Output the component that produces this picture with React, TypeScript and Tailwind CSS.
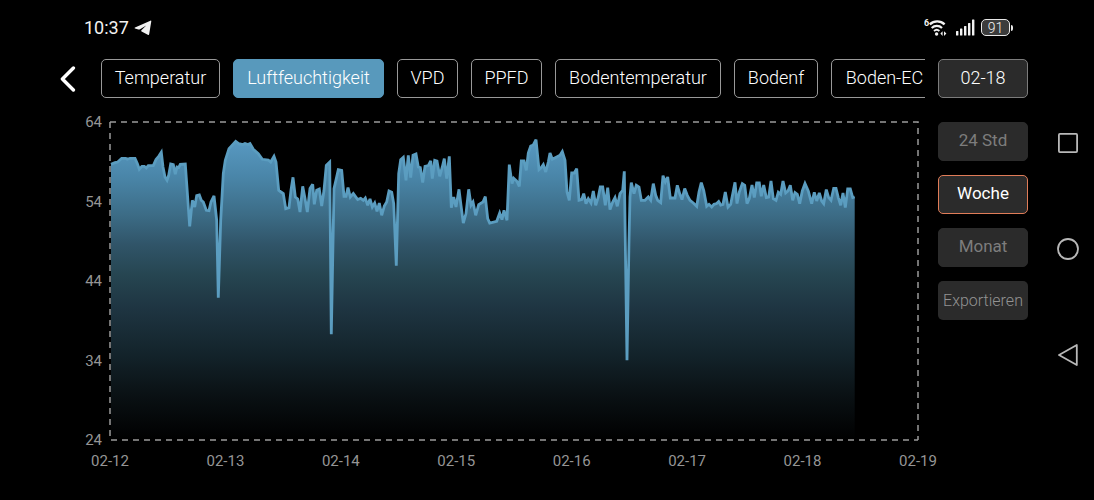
import { useState } from "react";

type Segment = { x: number; y: number; points: [number, number][] };

// Humidity curve, split into segments. Each point is stored in thirds of a plot unit,
// relative to the origin of its segment.
const segments: Segment[] = [
  {
    x: -30,
    y: -12,
    points: [
      [93, 162], [105, 157], [113, 155], [125, 144], [137, 144], [142, 147], [150, 144], [165, 144], [172, 160],
      [178, 177], [186, 168], [193, 168], [199, 173], [205, 166], [220, 166], [228, 148], [236, 138], [244, 126],
      [249, 170], [255, 200], [261, 210], [266, 195], [272, 161], [280, 163], [286, 192], [291, 170], [296, 172],
      [301, 162], [316, 161], [329, 348], [337, 270], [344, 290], [350, 256], [358, 254], [364, 270], [370, 275],
      [379, 300], [387, 301], [393, 275], [402, 257], [410, 330], [415, 562], [422, 330], [430, 190], [436, 150],
      [447, 115], [458, 103], [467, 93], [478, 101],
    ],
  },
  {
    x: 130,
    y: -12,
    points: [
      [0, 101], [8, 103], [15, 100], [24, 103], [30, 100], [40, 117], [55, 130], [67, 147], [85, 149], [92, 155],
      [102, 138], [108, 155], [116, 240], [123, 245], [130, 250], [137, 295], [147, 292], [153, 240], [159, 201],
      [166, 260], [173, 266], [180, 305], [188, 228], [195, 265], [202, 305], [210, 235], [218, 222], [223, 282],
      [230, 240], [238, 236], [245, 287], [252, 240], [259, 165], [269, 155], [274, 672], [282, 235], [289, 205],
      [295, 178], [305, 180], [312, 258], [318, 258], [324, 232], [331, 260], [340, 250], [353, 268], [362, 264],
      [370, 270], [376, 263], [383, 285], [390, 266], [397, 290], [404, 278], [411, 303], [418, 278], [425, 315],
      [433, 287], [440, 275], [447, 242], [455, 246], [461, 280], [469, 466], [476, 190], [482, 148], [490, 141],
      [498, 210], [505, 135], [512, 202], [519, 135],
    ],
  },
  {
    x: 290,
    y: -12,
    points: [
      [48, 131], [55, 170], [61, 172], [68, 217], [75, 168], [85, 166], [92, 152], [97, 205], [104, 150], [111, 152],
      [119, 198], [127, 170], [133, 145], [140, 205], [148, 138], [154, 292], [161, 260], [168, 290], [177, 237],
      [183, 285], [190, 338], [198, 310], [206, 237], [213, 285], [219, 275], [227, 315], [236, 283], [249, 275],
      [256, 259], [263, 325], [269, 338], [290, 333], [299, 308], [306, 328], [312, 300], [321, 330], [328, 163],
      [336, 220], [341, 204], [350, 212], [358, 228], [364, 152], [372, 152], [379, 180], [385, 128], [392, 107],
      [400, 104], [408, 88], [417, 178], [424, 172], [430, 163], [437, 185], [445, 155], [450, 128], [457, 147],
      [470, 140], [480, 135], [487, 124], [495, 150], [501, 245], [508, 270], [515, 188], [523, 188],
    ],
  },
  {
    x: 450,
    y: 8,
    points: [
      [50, 115], [57, 210], [65, 208], [71, 190], [78, 220], [85, 205], [93, 218], [100, 182], [107, 225], [115, 200],
      [121, 170], [128, 170], [136, 225], [143, 172], [150, 238], [158, 215], [165, 202], [172, 228], [180, 190],
      [188, 180], [193, 123], [201, 690], [207, 330], [210, 200], [214, 157], [222, 190], [229, 165], [237, 170],
      [244, 210], [255, 210], [265, 200], [272, 210], [280, 160], [287, 195], [293, 210], [302, 217], [309, 136],
      [316, 155], [323, 140], [331, 203], [345, 203], [352, 165], [359, 190], [366, 208], [374, 175], [382, 195],
      [390, 210], [400, 218], [410, 228], [417, 185], [424, 157], [431, 180],
    ],
  },
  {
    x: 590,
    y: 38,
    points: [
      [20, 138], [27, 132], [35, 140], [42, 132], [50, 130], [56, 124], [62, 134], [69, 132], [76, 95], [84, 140],
      [92, 132], [105, 66], [111, 130], [118, 95], [127, 70], [134, 75], [141, 130], [148, 115], [156, 74],
      [163, 112], [170, 68], [178, 68], [184, 108], [191, 74], [199, 112], [206, 110], [213, 62], [220, 115],
      [228, 120], [235, 96], [242, 102], [249, 62], [257, 98], [264, 92], [271, 75], [278, 120], [285, 97],
      [292, 102], [299, 130], [307, 92], [315, 70], [325, 92], [335, 130], [343, 96], [350, 122], [358, 98],
      [365, 122], [371, 130], [379, 88], [386, 112], [393, 120], [401, 84], [408, 84], [415, 112], [422, 135],
      [429, 98], [436, 142], [443, 86], [451, 86], [458, 112], [464, 110],
    ],
  },
];

const line = segments
  .flatMap((s) => s.points.map(([px, py]) => `${(s.x + px / 3).toFixed(1)},${(s.y + py / 3 + 0.3).toFixed(1)}`))
  .join(" L");

const metrics = [
  { name: "Temperatur", width: "w-[119px]" },
  { name: "Luftfeuchtigkeit", width: "w-[151px]" },
  { name: "VPD", width: "w-[61px]" },
  { name: "PPFD", width: "w-[71px]" },
  { name: "Bodentemperatur", width: "w-[166px]" },
  { name: "Bodenf", width: "w-[84px]" },
  { name: "Boden-EC", width: "w-[107px]" },
];

const ranges = ["24 Std", "Woche", "Monat"];
const yTicks = ["64", "54", "44", "34", "24"];
const xTicks = ["02-12", "02-13", "02-14", "02-15", "02-16", "02-17", "02-18", "02-19"];

function StatusBar() {
  return (
    <header className="flex h-[59px] items-center justify-between pb-1 pl-[84px] pr-[81px] text-[#f2f2f2]">
      <div className="flex items-center gap-[5px]">
        <time className="text-[18px] font-normal leading-6">10:37</time>
        <svg width="18" height="16" viewBox="0 0 18 16" fill="currentColor" aria-hidden="true">
          <path d="M16.4 .7 Q17.4 .3 17.3 1.3 L15.2 14 Q15 15.4 13.8 14.8 L7.6 11.4 Q6.8 10.9 7.4 10.2 L12.2 5.4 L5.6 9.4 Q5 9.7 4.4 9.5 L1 8.5 Q0 8 1 7.5Z" />
        </svg>
      </div>
      <div className="flex items-center">
        <svg width="23" height="19" viewBox="0 0 23 19" fill="none" stroke="currentColor" aria-hidden="true">
          <text x="0" y="8" fontSize="9" fontWeight="700" fill="currentColor" stroke="none">
            6
          </text>
          <path d="M5.8 6.3 A10.8 10.8 0 0 1 20.6 6.3" strokeWidth="2.4" />
          <path d="M7.7 10 A7.4 7.4 0 0 1 18 10" strokeWidth="2.2" />
          <path d="M10 13 A4 4 0 0 1 15.4 13" strokeWidth="1.8" />
          <circle cx="12.6" cy="16" r="1.7" fill="currentColor" stroke="none" />
          <path d="M18.6 13.2 V18 L16.4 15.6Z M20 18 V13.2 L22.4 15.6Z" fill="currentColor" stroke="none" />
        </svg>
        <svg className="ml-[9px]" width="20" height="17" viewBox="0 0 20 17" fill="currentColor" aria-hidden="true">
          <rect x="0" y="12" width="2.4" height="4.4" rx=".5" />
          <rect x="4" y="9.6" width="2.4" height="6.8" rx=".5" />
          <rect x="8" y="7" width="2.4" height="9.4" rx=".5" />
          <rect x="12" y="4" width="2.4" height="12.4" rx=".5" />
          <rect x="16" y="0.4" width="2.4" height="16" rx=".5" />
        </svg>
        <div className="ml-[5px] flex items-center gap-px">
          <span className="flex h-[17px] w-[29px] items-center justify-center rounded-[5px] border border-[#e8e8e8] bg-[#3c3c3c] text-[14px] leading-4">
            91
          </span>
          <span className="h-[6px] w-[2px] rounded-r bg-[#e8e8e8]" />
        </div>
      </div>
    </header>
  );
}

function Chart() {
  return (
    <section
      className="flex min-h-[260px] flex-1 pt-[24px] pb-[60px] text-[15px] font-normal leading-5 text-[#959595]"
      aria-label="Luftfeuchtigkeit"
    >
      <div className="-my-[10px] flex w-[56px] flex-col justify-between pr-2 text-right">
        {yTicks.map((t) => (
          <span key={t}>{t}</span>
        ))}
      </div>
      <div className="flex min-w-0 flex-1 flex-col">
        <svg
          className="block min-h-0 w-full flex-1 overflow-visible"
          viewBox="0 0 808 318"
          preserveAspectRatio="none"
          role="img"
          aria-label="Verlauf"
        >
          <defs>
            <linearGradient id="fill" gradientUnits="userSpaceOnUse" x1="0" y1="18" x2="0" y2="318">
              <stop offset="0" stopColor="#5899c2" />
              <stop offset="0.12" stopColor="#4a86a9" />
              <stop offset="0.25" stopColor="#3c6c86" />
              <stop offset="0.35" stopColor="#305468" />
              <stop offset="0.45" stopColor="#264551" />
              <stop offset="0.55" stopColor="#1f3643" />
              <stop offset="0.7" stopColor="#14252d" />
              <stop offset="0.85" stopColor="#0a1114" />
              <stop offset="1" stopColor="#000000" />
            </linearGradient>
          </defs>
          <path d="M0 0 H808 V318" fill="none" stroke="#9a9a9a" strokeWidth="1.5" strokeDasharray="6 5" vectorEffect="non-scaling-stroke" />
          <path d={`M1,318 L${line} V318Z`} fill="url(#fill)" />
          <path d={`M${line}`} fill="none" stroke="#5b9dc0" strokeWidth="2.8" strokeLinejoin="miter" strokeMiterlimit="3" vectorEffect="non-scaling-stroke" />
          <path d="M0 0 V318 H808" fill="none" stroke="#9a9a9a" strokeWidth="1.5" strokeDasharray="6 5" vectorEffect="non-scaling-stroke" />
        </svg>
        <div className="-mx-[22px] -mb-[31px] flex h-[31px] items-end justify-between">
          {xTicks.map((t) => (
            <span key={t} className="w-[44px] text-center">
              {t}
            </span>
          ))}
        </div>
      </div>
    </section>
  );
}

export default function App() {
  const [metric, setMetric] = useState("Luftfeuchtigkeit");
  const [range, setRange] = useState("Woche");

  return (
    <div className="flex min-h-screen flex-col bg-black font-['Roboto',sans-serif] font-light text-white">
      <StatusBar />
      <div className="flex flex-1">
        <main className="flex min-w-0 flex-1 flex-col pl-[54px]">
          <div className="flex items-center pl-[1px]">
            <button type="button" aria-label="Zurück" className="flex h-[39px] w-[46px] shrink-0 items-center pl-[5px]">
              <svg width="16" height="26" viewBox="0 0 16 26" fill="none" stroke="#fff" strokeWidth="3.4" strokeLinecap="round" strokeLinejoin="round" aria-hidden="true">
                <path d="M13.4 2 L2.4 13 L13.4 24" />
              </svg>
            </button>
            <nav className="flex min-w-0 flex-1 gap-[13px] overflow-hidden">
              {metrics.map((m) => (
                <button
                  key={m.name}
                  type="button"
                  onClick={() => setMetric(m.name)}
                  className={`${m.width} h-[39px] shrink-0 whitespace-nowrap rounded-[5px] border pb-[2px] text-[18px] ${
                    m.name === metric ? "border-[#5899bc] bg-[#5899bc]" : "border-[#999999] bg-black"
                  }`}
                >
                  {m.name}
                </button>
              ))}
            </nav>
          </div>
          <div className="flex flex-1 flex-col pr-[7px]">
            <Chart />
          </div>
        </main>
        <aside className="ml-[13px] flex w-[90px] flex-col gap-[14px] text-[18px]">
          <button type="button" className="mb-[10px] h-[39px] rounded-[5px] border border-[#7c7c7c] bg-[#2b2b2b] pb-[2px]">
            02-18
          </button>
          {ranges.map((r) => (
            <button
              key={r}
              type="button"
              onClick={() => setRange(r)}
              className={`h-[39px] rounded-[5px] border bg-[#2b2b2b] pb-[2px] text-[17px] font-normal ${
                r === range ? "border-[#e07c58] text-white" : "border-[#2b2b2b] text-[#7d7d7d]"
              }`}
            >
              {r}
            </button>
          ))}
          <button type="button" className="h-[39px] rounded-[5px] bg-[#2b2b2b] text-[16px] text-[#929292]">
            Exportieren
          </button>
        </aside>
        <nav className="-mt-[59px] ml-[13px] flex w-[53px] flex-col items-center justify-center gap-[84px] pb-[2px]">
          <button type="button" aria-label="Letzte Apps">
            <svg className="block" width="22" height="22" viewBox="0 0 22 22" fill="none" stroke="#b8b8b8" strokeWidth="1.8" aria-hidden="true">
              <rect x="1.9" y="1.9" width="18.2" height="18.2" rx="1" />
            </svg>
          </button>
          <button type="button" aria-label="Startbildschirm">
            <svg className="block" width="22" height="22" viewBox="0 0 22 22" fill="none" stroke="#b8b8b8" strokeWidth="1.8" aria-hidden="true">
              <circle cx="11" cy="11" r="10" />
            </svg>
          </button>
          <button type="button" aria-label="Zurück (System)">
            <svg className="block" width="22" height="22" viewBox="0 0 22 22" fill="none" stroke="#b8b8b8" strokeWidth="1.8" strokeLinejoin="round" aria-hidden="true">
              <path d="M19.8 1 V21 L2 11Z" />
            </svg>
          </button>
        </nav>
      </div>
    </div>
  );
}
